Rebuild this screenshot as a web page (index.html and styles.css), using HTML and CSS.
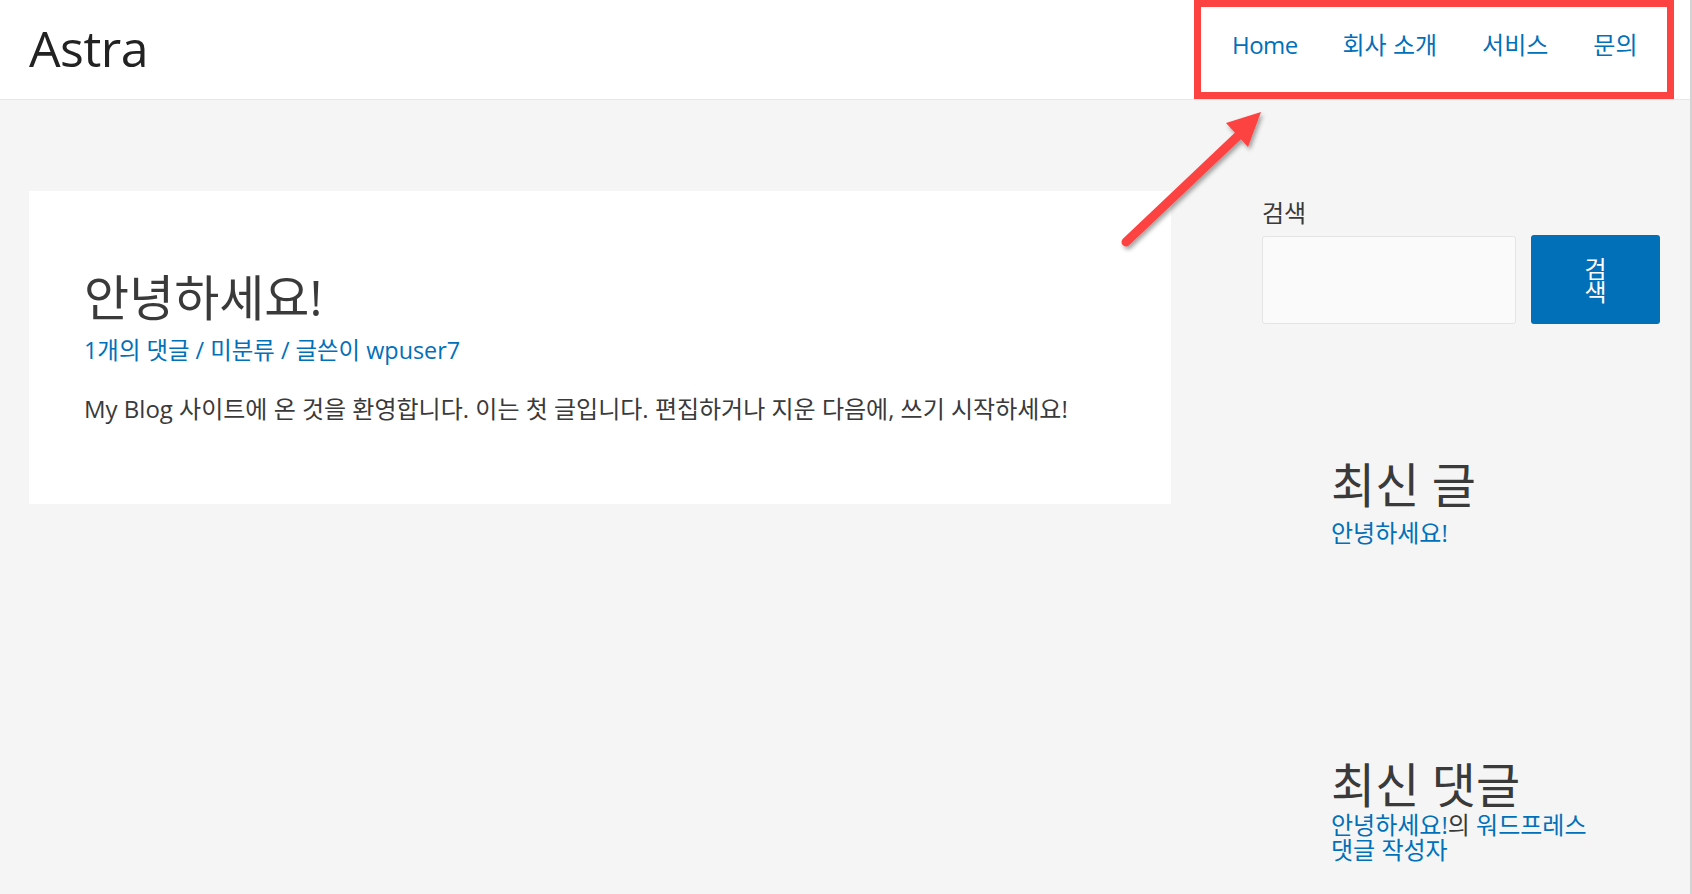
FILE: index.html
```html
<!DOCTYPE html>
<html lang="ko">
<head>
<meta charset="utf-8">
<title>Astra</title>
<link rel="stylesheet" href="styles.css">
</head>
<body>
<header class="site-header">
  <div class="site-title">Astra</div>
  <nav class="main-menu">
    <a class="menu-item" href="#">Home</a>
    <a class="menu-item" href="#">회사 소개</a>
    <a class="menu-item" href="#">서비스</a>
    <a class="menu-item" href="#">문의</a>
  </nav>
</header>

<div class="site-content">
  <main class="primary">
    <article class="post">
      <h1 class="entry-title">안녕하세요!</h1>
      <div class="entry-meta"><a href="#">1개의 댓글</a> / <a href="#">미분류</a> / <a href="#">글쓴이 wpuser7</a></div>
      <p class="entry-content">My Blog 사이트에 온 것을 환영합니다. 이는 첫 글입니다. 편집하거나 지운 다음에, 쓰기 시작하세요!</p>
    </article>
  </main>

  <aside class="sidebar">
    <div class="widget-search">
      <label class="search-label">검색</label>
      <div class="search-row">
        <div class="search-input"></div>
        <button class="search-button"><span class="search-button-text">검색</span></button>
      </div>
    </div>

    <section class="widget widget-recent-posts">
      <h2 class="widget-title">최신 글</h2>
      <a class="widget-link" href="#">안녕하세요!</a>
    </section>

    <section class="widget widget-recent-comments">
      <h2 class="widget-title">최신 댓글</h2>
      <div class="comment-line"><a href="#">안녕하세요!</a>의 <a href="#">워드프레스 댓글 작성자</a></div>
    </section>
  </aside>
</div>

<div class="scrollbar-edge"></div>

<svg class="annotation" width="1692" height="894" viewBox="0 0 1692 894" xmlns="http://www.w3.org/2000/svg">
  <defs>
    <filter id="shadow" x="-20%" y="-20%" width="140%" height="140%">
      <feDropShadow dx="2" dy="3" stdDeviation="2" flood-color="#000" flood-opacity="0.35"/>
    </filter>
  </defs>
  <rect x="1197.5" y="3.5" width="473" height="92" fill="none" stroke="#fd4242" stroke-width="7"/>
  <g filter="url(#shadow)">
    <line x1="1126" y1="242" x2="1240" y2="134" stroke="#fd4242" stroke-width="9" stroke-linecap="round"/>
    <polygon points="1261,112 1226,123 1248,147" fill="#fd4242"/>
  </g>
</svg>
</body>
</html>
```

FILE: styles.css
```css
html, body {
  margin: 0;
  padding: 0;
  overflow: hidden;
}

body {
  width: 1692px;
  height: 894px;
  background: #f5f5f5;
  color: #3a3a3a;
  font-family: "Open Sans", "Noto Sans CJK KR", sans-serif;
  font-size: 24px;
  line-height: 1.2;
  position: relative;
  word-break: keep-all;
}

a {
  color: #0170b9;
  text-decoration: none;
}

.site-header {
  height: 99px;
  background: #fff;
  border-bottom: 1px solid #e8e8e8;
  display: flex;
  align-items: center;
  justify-content: space-between;
  padding: 0 32px 0 29px;
}

.site-title {
  font-size: 50px;
  letter-spacing: -0.5px;
  color: #222;
  line-height: 1;
  margin-bottom: 4px;
}

.main-menu {
  display: flex;
  margin-bottom: 9px;
}

.menu-item {
  font-size: 24px;
  padding: 0 22.5px;
}

.menu-item:first-child {
  letter-spacing: -0.6px;
}

.site-content {
  display: flex;
  gap: 91px;
  padding: 91px 32px 0 29px;
}

.primary {
  width: 1142px;
  flex: none;
}

.post {
  background: #fff;
  padding: 79px 55px 82px;
}

.entry-title {
  margin: 0;
  font-size: 49px;
  font-weight: 400;
  line-height: 54px;
  color: #3a3a3a;
}

.entry-meta {
  margin-top: 13px;
  font-size: 23.4px;
  line-height: 26px;
  color: #0170b9;
}

.entry-content {
  margin: 33px 0 0;
  line-height: 26px;
}

.sidebar {
  flex: 1;
  padding-top: 9px;
}

.search-label {
  display: block;
  line-height: 26px;
}

.search-row {
  display: flex;
  gap: 15px;
  margin-top: 10px;
}

.search-input {
  width: 252px;
  height: 86px;
  background: #fafafa;
  border: 1px solid #e4e4e4;
  border-radius: 3px;
}

.search-button {
  flex: 1;
  height: 89px;
  margin-top: -1px;
  background: #0170b9;
  border: none;
  border-radius: 3px;
  color: #fff;
  font-family: inherit;
  font-size: 24px;
  padding: 0;
  display: flex;
  align-items: center;
  justify-content: center;
}

.search-button-text {
  display: block;
  width: 1em;
  line-height: 23px;
  word-break: break-all;
}

.widget {
  padding: 0 40px 0 69px;
}

.widget-title {
  margin: 0;
  font-size: 48px;
  font-weight: 400;
  line-height: 54px;
  color: #3a3a3a;
}

.widget-recent-posts {
  margin-top: 134px;
}

.widget-link {
  display: block;
  margin-top: 8px;
  line-height: 26px;
}

.widget-recent-comments {
  margin-top: 212px;
}

.comment-line {
  margin-top: 0;
  line-height: 25px;
  width: 285px;
}

.scrollbar-edge {
  position: absolute;
  top: 0;
  right: 0;
  width: 2px;
  height: 894px;
  background: #d2d2d2;
}

.annotation {
  position: absolute;
  top: 0;
  left: 0;
  pointer-events: none;
}
```
